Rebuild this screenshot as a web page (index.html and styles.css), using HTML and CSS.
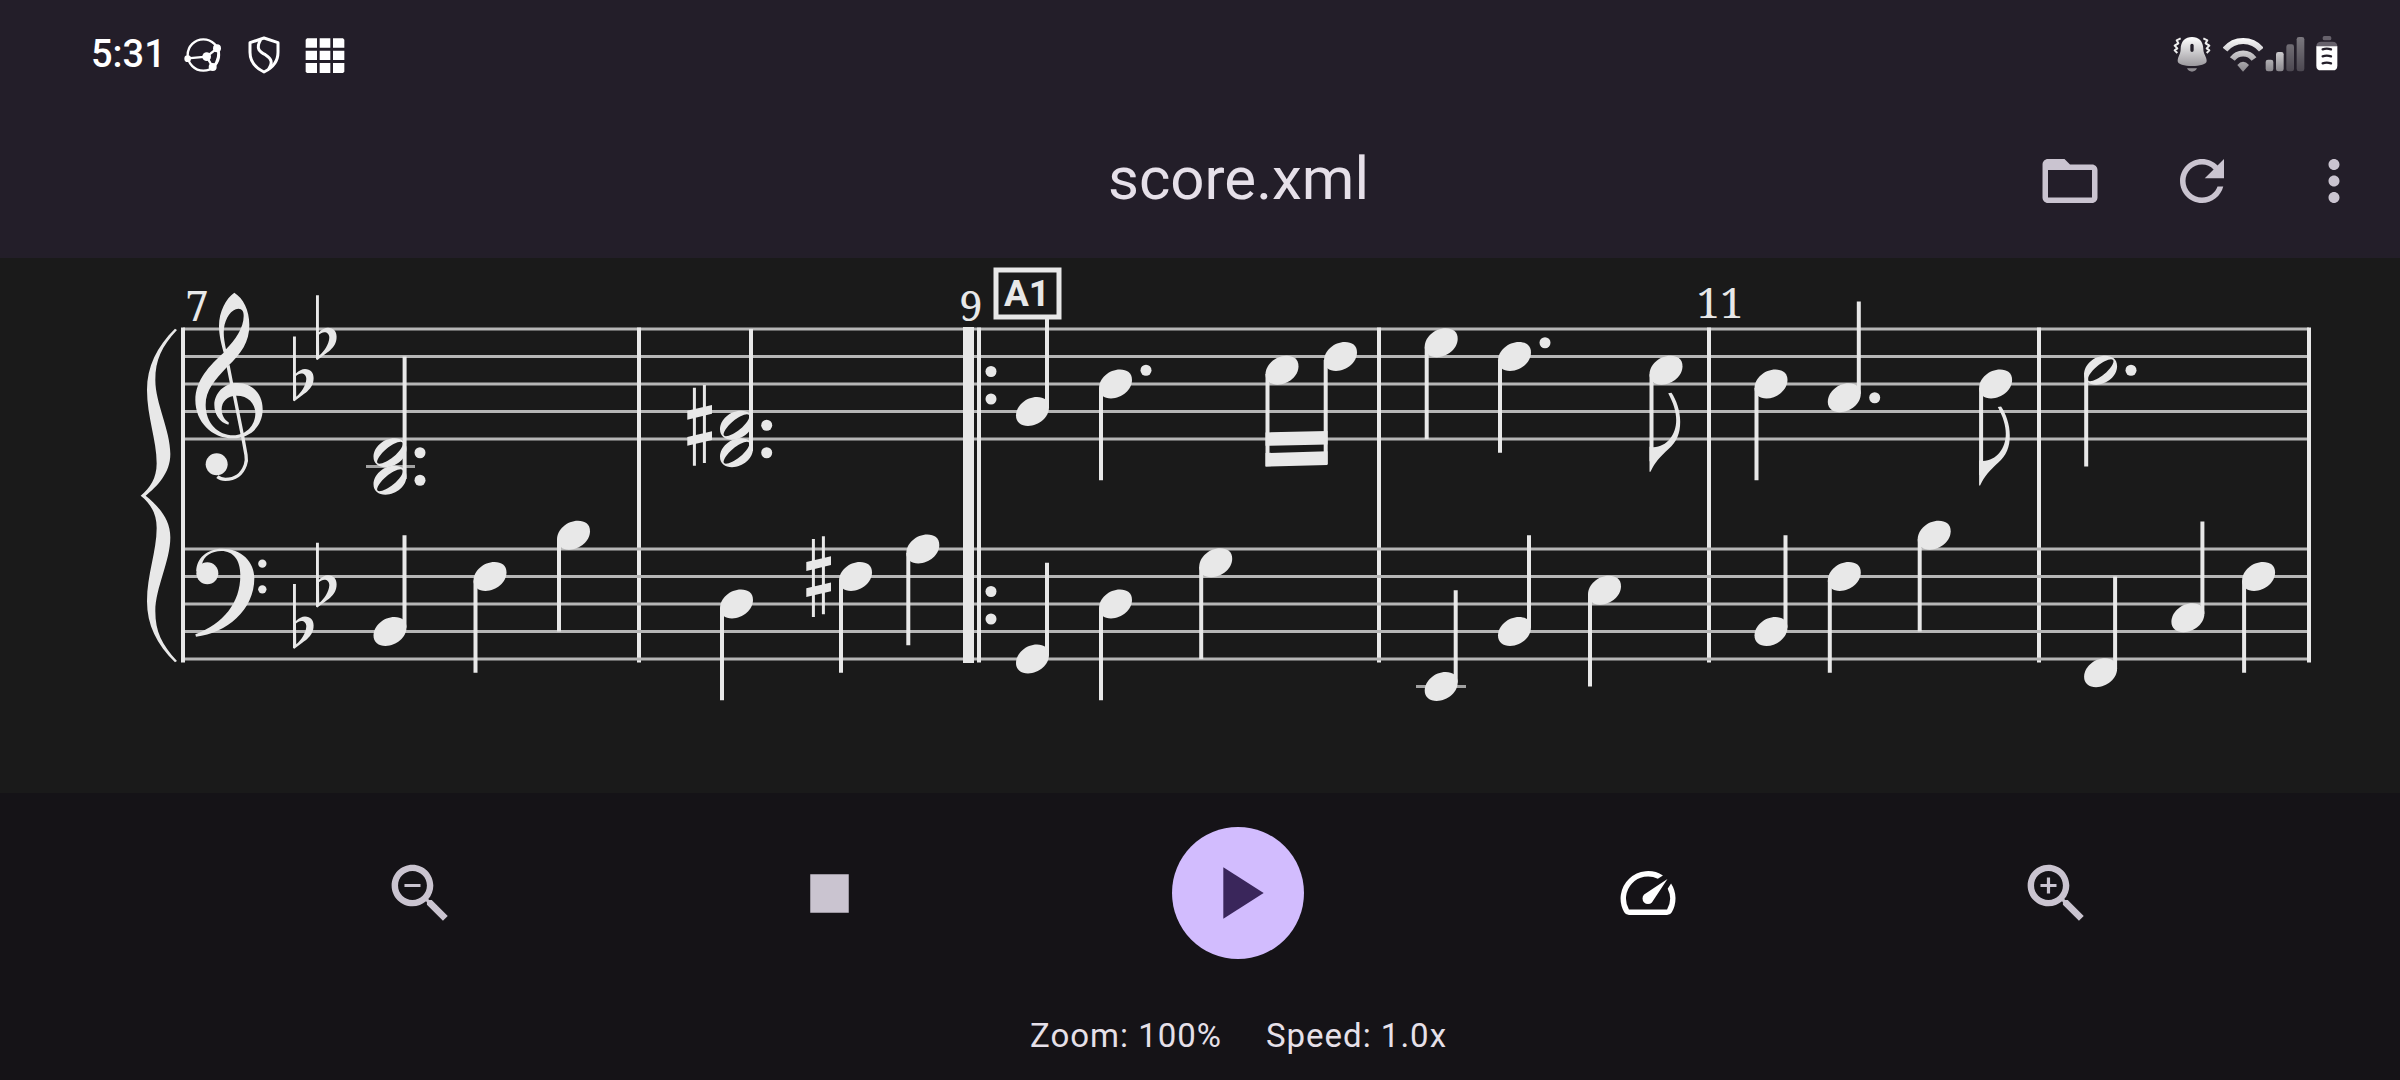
FILE: index.html
```html
<!DOCTYPE html>
<html lang="en">
<head>
<meta charset="utf-8">
<meta name="viewport" content="width=device-width, initial-scale=1">
<title>score.xml</title>
<link rel="stylesheet" href="styles.css">
</head>
<body>
<div class="app">
  <div class="status-bar">
    <div class="status-group status-left">
      <span class="clock">5:31</span>
      <div class="status-group notifications">
        <svg class="status-icon" viewBox="370 43 120 120" aria-hidden="true">
          <g fill="none" stroke="#fff" stroke-width="7">
            <ellipse cx="431" cy="106" rx="47" ry="47"/>
            <path d="M384 116L441 111L472 86M441 111L459 142M474 88Q482 112 462 142"/>
          </g>
          <g fill="#fff"><circle cx="384" cy="117" r="10"/><circle cx="472" cy="86" r="12"/><circle cx="441" cy="111" r="13"/><circle cx="459" cy="142" r="12"/></g>
        </svg>
        <svg class="status-icon" viewBox="553 43 120 120" aria-hidden="true">
          <g fill="none" stroke="#fff" stroke-width="9" stroke-linejoin="round">
            <path d="M613 55L571 69V98C571 128 592 147 613 157C634 147 655 128 655 98V69Z"/>
            <path d="M603 60C586 88 602 97 617 105C636 117 640 129 627 148"/>
          </g>
        </svg>
        <svg class="status-icon" viewBox="736 43 120 120" fill="#fff" aria-hidden="true">
          <path d="M742 56h30v28h-34v-24zM780 56h32v28h-32zM820 56h30l4 4v24h-34zM738 93h34v28h-34zM780 93h32v28h-32zM820 93h34v28h-34zM738 130h34v30h-30l-4-4zM780 130h32v30h-32zM820 130h34v26l-4 4h-30z"/>
        </svg>
      </div>
    </div>
    <div class="status-group status-right">
      <svg class="status-icon status-icon-wide" viewBox="457 43 147 120" aria-hidden="true">
        <defs>
          <linearGradient id="fade" gradientUnits="userSpaceOnUse" x1="0" y1="52" x2="0" y2="156">
            <stop offset="0" stop-color="#fff"/><stop offset="1" stop-color="#88858b"/>
          </linearGradient>
        </defs>
        <path fill="url(#fade)" fill-rule="evenodd" d="M517 52C537 52 551 65 551 88C551 105 561 110 561 124C561 134 540 139 517 139C494 139 474 134 474 124C474 110 483 105 483 88C483 65 497 52 517 52ZM517 72Q512 72 512 77V92Q512 97 517 97T522 92V77Q522 72 517 72ZM502 146H532Q527 156 517 156T502 146Z"/>
        <path fill="none" stroke="#eee" stroke-width="6" stroke-linejoin="round" d="M483 56L471 62L476 71L465 78L473 86L465 92L473 100M551 56L563 62L558 71L569 78L561 86L569 92L561 100"/>
      </svg>
      <svg class="status-icon" viewBox="610 43 120 120" aria-hidden="true">
        <g fill="none" stroke="url(#fade)" stroke-width="18">
          <path d="M616 90A70 70 0 0 1 725 90"/>
          <path d="M638 118A40 40 0 0 1 703 118"/>
        </g>
        <path fill="url(#fade)" d="M653 136Q670 116 688 136L670 156Z"/>
      </svg>
      <svg class="status-icon" viewBox="735 43 120 120" aria-hidden="true">
        <g fill="url(#fade)"><rect x="737" y="120" width="23" height="35" rx="7"/><rect x="768" y="97" width="23" height="58" rx="7"/></g>
        <g fill="url(#fade)" opacity=".4"><rect x="799" y="74" width="23" height="81" rx="7"/><rect x="830" y="52" width="23" height="103" rx="7"/></g>
      </svg>
      <svg class="status-icon" viewBox="860 43 120 120" aria-hidden="true">
        <path fill="#66616b" d="M912 49h16q5 0 5 5v3q0 5-5 5h-16q-5 0-5-5v-3q0-5 5-5zM903 66h33q15 0 15 15h-63q0-15 15-15z"/>
        <path fill="#fff" d="M888 80h63v58q0 14-14 14h-35q-14 0-14-14z"/>
        <path fill="none" stroke="#231e29" stroke-width="7" stroke-linecap="round" d="M907 89q12-4 25 0M907 110q12-4 25 0M907 131q12-4 25 0"/>
      </svg>
    </div>
  </div>

  <header class="app-bar">
    <h1 class="title">score.xml</h1>
    <div class="actions">
      <button class="icon-button" type="button" aria-label="Open file">
        <svg class="icon" viewBox="0 0 24 24"><path d="M20 6h-8l-2-2H4c-1.1 0-1.99.9-1.99 2L2 18c0 1.1.9 2 2 2h16c1.1 0 2-.9 2-2V8c0-1.1-.9-2-2-2zm0 12H4V8h16v10z"/></svg>
      </button>
      <button class="icon-button" type="button" aria-label="Reload">
        <svg class="icon" viewBox="0 0 24 24"><path d="M17.65 6.35C16.2 4.9 14.21 4 12 4c-4.42 0-7.99 3.58-7.99 8s3.57 8 7.99 8c3.73 0 6.84-2.55 7.73-6h-2.08c-.82 2.33-3.04 4-5.65 4-3.31 0-6-2.69-6-6s2.69-6 6-6c1.66 0 3.14.69 4.22 1.78L13 11h7V4l-2.35 2.35z"/></svg>
      </button>
      <button class="icon-button" type="button" aria-label="More options">
        <svg class="icon" viewBox="0 0 24 24"><path d="M12 8c1.1 0 2-.9 2-2s-.9-2-2-2-2 .9-2 2 .9 2 2 2zm0 2c-1.1 0-2 .9-2 2s.9 2 2 2 2-.9 2-2-.9-2-2-2zm0 6c-1.1 0-2 .9-2 2s.9 2 2 2 2-.9 2-2-.9-2-2-2z"/></svg>
      </button>
    </div>
  </header>

  <main class="score">
    <svg class="sheet" viewBox="0 258 2400 535" role="img" aria-label="Sheet music, measures 7 to 12">
      <defs>
        <path id="head" d="M-16.5 4C-16.5 11 -11.5 14.4 -4.5 14.4C6.5 14.4 16.5 5.5 16.5 -4C16.5 -11 11.5 -14.4 4.5 -14.4C-6.5 -14.4 -16.5 -5.5 -16.5 4Z"/>
        <g id="up"><use href="#head"/><path class="stem" d="M14.5 -4V-96.25"/></g>
        <g id="down"><use href="#head"/><path class="stem" d="M-14.5 4V96.25"/></g>
        <path id="half" fill-rule="evenodd" d="M-16.5 4C-16.5 11 -11.5 14.4 -4.5 14.4C6.5 14.4 16.5 5.5 16.5 -4C16.5 -11 11.5 -14.4 4.5 -14.4C-6.5 -14.4 -16.5 -5.5 -16.5 4ZM12.5 -10.3C10.4 -12.6 2.8 -9.2 -3.4 -4.1S-14.3 8 -12.5 10.3S-2.8 9.2 3.4 4.1S14.3 -8 12.5 -10.3Z"/>
        <g id="eighth"><use href="#head"/><path class="stem" d="M-14.5 4V91"/>
          <path d="M-16.5 76.4V101.4H-15.5C-10.8 91.4 -5.8 86.4 2.5 78.7C10.9 71.4 14.2 63 14.2 51.4C14.2 39.8 10.2 29.7 5.5 22.4L2.2 23.1C7.5 33 10.2 41.4 10.2 49.8C10.2 64.8 .9 76.4 -12.5 77Z"/></g>
        <circle id="dot" r="5.5"/>
        <path id="flat" fill-rule="evenodd" d="M0 -47.4H2.9V-10.5C6 -13.5 9 -15 12 -15C17.5 -15 20.6 -11.5 20.6 -6C20.6 6 10 10 1.5 17.2L0 16.5ZM3 -8C7 -12.5 13.5 -11 13.3 -5C13 1.5 8 9 3.2 12.8Z"/>
        <path id="sharp" d="M0 -14.6L24.7 -20.3V-11.6L0 -5.6ZM0 11.7L24.7 6V14.7L0 20.4ZM5.6 -37.6H8.6V40.4H5.6ZM15.6 -40.3H18.6V37.7H15.6Z"/>
      </defs>

      <path class="line" d="M183 329H2309M183 356.5H2309M183 384H2309M183 411.5H2309M183 439H2309"/>
      <path class="bar" d="M639 327.5V662.5M1379 327.5V662.5M1709 327.5V662.5M2039 327.5V662.5"/>
      <path class="line" d="M183 549H2309M183 576.5H2309M183 604H2309M183 631.5H2309M183 659H2309"/>
      <path class="bar" d="M183 327.5V662.5M979 327.5V662.5M2309 327.5V662.5"/>
      <rect x="963" y="327" width="11" height="336"/>

      <!-- brace and clefs, drawn at three times size -->
      <g transform="translate(120 250) scale(.33333)">
        <path d="M165 236C110 290 81 350 81 420C81 500 110 570 110 640C110 685 90 715 62 737C90 759 110 789 110 834C110 904 81 974 81 1054C81 1124 110 1184 165 1237L171 1233C125 1184 106 1144 106 1084C106 1014 151 934 151 862C151 804 110 764 77 737C110 710 151 670 151 612C151 540 106 460 106 390C106 330 125 290 171 240Z"/>
        <path fill-rule="evenodd" d="M343 128C318 145 297 185 297 228C297 258 305 285 311 308C270 345 226 390 226 450C226 515 275 565 338 565C392 565 428 528 428 478C428 432 397 399 352 399C312 399 283 430 283 465C283 492 298 517 325 524L327 518C312 508 305 495 305 478C305 455 322 437 350 437C384 437 406 460 406 490C406 527 378 556 340 556C295 556 257 520 257 465C257 420 285 390 321 351C365 310 388 275 388 225C388 180 370 145 343 128ZM318 298C312 270 310 255 312 235C315 205 335 176 355 176C367 176 371 185 371 198C371 235 345 270 318 298Z"/>
        <path class="curl" d="M324 346L335 402L344 440L369 565L378 615Q381 632 376 645C365 676 343 688 316 688Q302 688 292 680"/>
        <circle cx="290" cy="643" r="33"/>
        <path d="M229 965C228 925 262 896 306 896C365 896 403 935 403 985C403 1080 320 1150 228 1160L226 1153C310 1120 361 1060 361 975C361 930 340 903 304 903C275 903 252 918 246 942Z"/>
        <circle cx="262" cy="970" r="33"/>
        <circle cx="427" cy="941" r="12.5"/><circle cx="427" cy="1018" r="12.5"/>
      </g>
      <use href="#flat" x="293" y="384"/><use href="#flat" x="316" y="342.75"/>
      <use href="#flat" x="293" y="631.5"/><use href="#flat" x="316" y="590.25"/>

      <!-- measure 7 -->
      <path class="ledger" d="M366 466.5H415"/>
      <use href="#half" x="390" y="452.75"/><use href="#half" x="390" y="480.25"/>
      <path class="stem" d="M404.6 356.5V479"/>
      <use href="#dot" x="420" y="452.75"/><use href="#dot" x="420" y="480.25"/>
      <use href="#up" x="390" y="631.5"/><use href="#down" x="490" y="576.5"/><use href="#down" x="573.5" y="535.25"/>

      <!-- measure 8 -->
      <use href="#sharp" x="687.3" y="425.25"/>
      <use href="#half" x="736.5" y="425.25"/><use href="#half" x="736.5" y="452.75"/>
      <path class="stem" d="M751 329V451"/>
      <use href="#dot" x="766.7" y="425.25"/><use href="#dot" x="766.7" y="452.75"/>
      <use href="#down" x="736.5" y="604"/><use href="#sharp" x="806.3" y="576.5"/>
      <use href="#down" x="855.5" y="576.5"/><use href="#down" x="922.8" y="549"/>

      <!-- measure 9 -->
      <use href="#dot" x="991" y="371.5"/><use href="#dot" x="991" y="399"/>
      <use href="#dot" x="991" y="591.5"/><use href="#dot" x="991" y="619"/>
      <use href="#up" x="1032.5" y="411.5"/><use href="#down" x="1115.5" y="384"/><use href="#dot" x="1146" y="370.25"/>
      <use href="#head" x="1282" y="370.25"/><use href="#head" x="1340.5" y="356.5"/>
      <path class="stem" d="M1267.5 374V466M1325.7 360V464"/>
      <path d="M1265.5 453L1327.5 451.3V465L1265.5 466.7ZM1265.5 432.4L1327.5 431V444.4L1265.5 445.8Z"/>
      <use href="#up" x="1032.5" y="659"/><use href="#down" x="1115.5" y="604"/><use href="#down" x="1215.7" y="562.75"/>

      <!-- measure 10 -->
      <use href="#down" x="1441.2" y="342.75"/><use href="#down" x="1514.5" y="356.5"/><use href="#dot" x="1545" y="342.75"/>
      <use href="#eighth" x="1666" y="370.25"/>
      <path class="ledger" d="M1416 686.5H1466"/>
      <use href="#up" x="1441.2" y="686.5"/><use href="#up" x="1514.5" y="631.5"/><use href="#down" x="1604.5" y="590.25"/>

      <!-- measure 11 -->
      <use href="#down" x="1771" y="384"/><use href="#up" x="1844.3" y="397.75"/><use href="#dot" x="1874.7" y="397.75"/>
      <use href="#eighth" x="1995.6" y="384"/>
      <use href="#up" x="1771" y="631.5"/><use href="#down" x="1844.3" y="576.5"/><use href="#down" x="1934.2" y="535.25"/>

      <!-- measure 12 -->
      <use href="#half" x="2100.6" y="370.25"/><path class="stem" d="M2086.2 373V466.5"/><use href="#dot" x="2131" y="370.25"/>
      <use href="#up" x="2100.6" y="672.75"/><use href="#up" x="2187.9" y="617.75"/><use href="#down" x="2258.6" y="576.5"/>

      <rect class="mark-box" x="996" y="270" width="63" height="47"/>
      <text class="mark" x="1027" y="306">A1</text>
      <text class="measure" x="197" y="321">7</text>
      <text class="measure" x="971" y="321">9</text>
      <text class="measure" x="1720" y="318">11</text>
    </svg>
  </main>

  <footer class="player">
    <div class="controls">
      <button class="icon-button" type="button" aria-label="Zoom out">
        <svg class="icon icon-large" viewBox="0 0 24 24"><path d="M15.5 14h-.79l-.28-.27C15.41 12.59 16 11.11 16 9.5 16 5.91 13.09 3 9.5 3S3 5.91 3 9.5 5.91 16 9.5 16c1.61 0 3.09-.59 4.23-1.57l.27.28v.79l5 4.99L20.49 19l-4.99-5zm-6 0C7.01 14 5 11.99 5 9.5S7.01 5 9.5 5 14 7.01 14 9.5 11.99 14 9.5 14zM7 9h5v1H7z"/></svg>
      </button>
      <button class="icon-button" type="button" aria-label="Stop">
        <svg class="icon icon-large" viewBox="0 0 24 24"><path d="M6 6h12v12H6z"/></svg>
      </button>
      <button class="icon-button play" type="button" aria-label="Play">
        <svg class="icon icon-play" viewBox="0 0 24 24"><path d="M8 5v14l11-7z"/></svg>
      </button>
      <button class="icon-button speed" type="button" aria-label="Playback speed">
        <svg class="icon" viewBox="0 0 24 24"><path d="M20.38 8.57l-1.23 1.85a8 8 0 0 1-.22 7.58H5.07A8 8 0 0 1 15.58 6.85l1.85-1.23A10 10 0 0 0 3.35 19a2 2 0 0 0 1.72 1h13.85a2 2 0 0 0 1.74-1 10 10 0 0 0-.27-10.44zm-9.79 6.84a2 2 0 0 0 2.83 0l5.66-8.49-8.49 5.66a2 2 0 0 0 0 2.83z"/></svg>
      </button>
      <button class="icon-button" type="button" aria-label="Zoom in">
        <svg class="icon icon-large" viewBox="0 0 24 24"><path d="M15.5 14h-.79l-.28-.27C15.41 12.59 16 11.11 16 9.5 16 5.91 13.09 3 9.5 3S3 5.91 3 9.5 5.91 16 9.5 16c1.61 0 3.09-.59 4.23-1.57l.27.28v.79l5 4.99L20.49 19l-4.99-5zm-6 0C7.01 14 5 11.99 5 9.5S7.01 5 9.5 5 14 7.01 14 9.5 11.99 14 9.5 14zm2.5-4h-2v2H9v-2H7V9h2V7h1v2h2v1z"/></svg>
      </button>
    </div>
    <div class="readout">
      <span>Zoom: 100%</span>
      <span>Speed: 1.0x</span>
    </div>
  </footer>
</div>
</body>
</html>
```
FILE: styles.css
```css
* {
  box-sizing: border-box;
}

body {
  margin: 0;
  background: #151317;
  color: #e6e0e9;
  font-family: Roboto, sans-serif;
}

.app {
  display: flex;
  flex-direction: column;
  min-height: 100vh;
}

.status-bar {
  display: flex;
  align-items: center;
  justify-content: space-between;
  height: 104px;
  padding: 4px 53px 0 91px;
  background: #231e29;
}

.status-group {
  display: flex;
  align-items: center;
}

.status-left {
  gap: 17px;
}

.notifications {
  gap: 21px;
}

.status-right {
  gap: 2px;
}

.clock {
  color: #fff;
  font-size: 38px;
  font-weight: 500;
  line-height: 40px;
}

.status-icon {
  display: block;
  width: 40px;
  height: 40px;
}

.status-icon-wide {
  width: 49px;
}

.app-bar {
  display: grid;
  grid-template-columns: 1fr auto 1fr;
  align-items: center;
  height: 154px;
  padding-left: 77px;
  background: #231e29;
}

.title {
  grid-column: 2;
  margin: 0;
  padding-bottom: 4px;
  font-size: 60px;
  font-weight: 400;
  line-height: 76px;
}

.actions {
  display: flex;
  justify-content: flex-end;
}

.icon-button {
  display: flex;
  align-items: center;
  justify-content: center;
  width: 132px;
  height: 132px;
  padding: 0;
  border: 0;
  border-radius: 50%;
  background: none;
  color: #cac4d0;
}

.icon {
  display: block;
  width: 66px;
  height: 66px;
  fill: currentColor;
}

.icon-large {
  width: 77px;
  height: 77px;
}

.icon-play {
  width: 88px;
  height: 88px;
}

.play {
  background: #d2bcfe;
  color: #3a265b;
}

.speed {
  color: #fff;
}

.score {
  background: #1a1a1a;
}

.sheet {
  display: block;
  width: 100%;
  fill: #e8e8e8;
}

.line,
.ledger {
  fill: none;
  stroke: #b6b6b6;
  stroke-width: 3;
}

.ledger {
  stroke: #a2a2a2;
}

.bar,
.stem {
  fill: none;
  stroke: #e8e8e8;
  stroke-width: 4;
}

.curl {
  fill: none;
  stroke: #e8e8e8;
  stroke-width: 10;
}

.mark-box {
  fill: #1a1a1a;
  stroke: #e8e8e8;
  stroke-width: 5;
}

.mark {
  font-size: 37px;
  font-weight: 700;
  text-anchor: middle;
}

.measure {
  font-family: "Noto Serif", "Liberation Serif", serif;
  font-size: 42px;
  text-anchor: middle;
}

.player {
  display: flex;
  flex: 1;
  flex-direction: column;
  gap: 55px;
  padding: 34px 0 22px 77px;
}

.controls {
  display: flex;
  justify-content: space-evenly;
}

.readout {
  display: flex;
  justify-content: center;
  gap: 44px;
  font-size: 33px;
  line-height: 44px;
  letter-spacing: 1px;
}
```
